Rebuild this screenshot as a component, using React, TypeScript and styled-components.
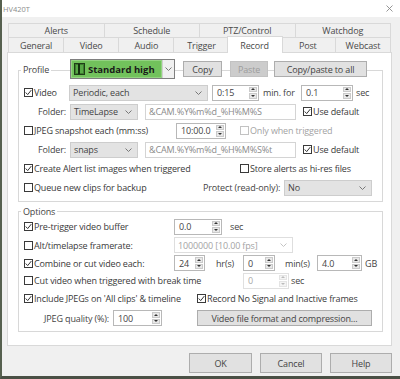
import React from "react";
import styled, { createGlobalStyle, css } from "styled-components";

const GlobalStyle = createGlobalStyle`
  html, body { margin: 0; padding: 0; background: #4b5546; }
  * { box-sizing: border-box; }
`;

const Window = styled.div`
  width: 400px;
  height: 379px;
  display: flex;
  flex-direction: column;
  background: #f0f0f0;
  border-left: 2px solid #56604f;
  border-bottom: 3px solid #4a5045;
  font-family: "Open Sans", "Noto Sans", sans-serif;
  font-size: 9px;
  letter-spacing: -0.15px;
  color: #3a3a3a;
  overflow: hidden;
`;

const TitleBar = styled.div`
  height: 17px;
  flex: none;
  display: flex;
  align-items: center;
  justify-content: space-between;
  background: #fff;
  padding: 0 7px 0 1px;
`;

const Title = styled.span`
  font-size: 7.5px;
  letter-spacing: 0;
  color: #8c8c8c;
`;

const Body = styled.div`
  flex: 1;
  display: flex;
  flex-direction: column;
  padding: 6px 8px 0 5px;
`;

const TabRow = styled.div<{ $h: number }>`
  display: flex;
  height: ${(p) => p.$h}px;
  margin: 0 1px;
  flex: none;
`;

const Tab = styled.div<{ $active?: boolean; $top?: boolean }>`
  flex: 1;
  display: flex;
  align-items: center;
  justify-content: center;
  background: #f0f0f0;
  color: #4a4a4a;
  border: 1px solid #d9d9d9;
  border-top: ${(p) => (p.$top ? "1px solid #d9d9d9" : "none")};
  border-bottom: ${(p) => (p.$top ? "1px solid #d9d9d9" : "none")};
  margin-left: -1px;
  &:first-child {
    margin-left: 0;
  }
  ${(p) =>
    p.$active &&
    css`
      background: #fff;
      border-top: 1px solid #d9d9d9;
      margin: -2px -2px -1px -3px;
      position: relative;
      z-index: 1;
    `}
`;

const Panel = styled.div`
  height: 294px;
  flex: none;
  display: flex;
  flex-direction: column;
  background: #fff;
  border: 1px solid #d9d9d9;
  padding: 0 8px 0 10px;
`;

const Group = styled.div<{ $mt: number; $pb: number }>`
  margin-top: ${(p) => p.$mt}px;
  border: 1px solid #d8d8d8;
  padding: 0 4px ${(p) => p.$pb}px 5px;
  display: flex;
  flex-direction: column;
`;

const GroupHeader = styled.div<{ $h: number; $mt: number }>`
  display: flex;
  align-items: center;
  height: ${(p) => p.$h}px;
  margin: ${(p) => p.$mt}px 0 0 -3px;
`;

const Legend = styled.span`
  background: #fff;
  padding: 0 2px;
  color: #444;
`;

const LegendCell = styled.div<{ $w: number }>`
  width: ${(p) => p.$w}px;
  flex: none;
`;

const Row = styled.div<{ $h: number; $mt?: number }>`
  display: flex;
  align-items: center;
  height: ${(p) => p.$h}px;
  margin-top: ${(p) => p.$mt ?? 0}px;
  flex: none;
`;

const CheckItem = styled.div<{ $w?: number; $ml?: number; $disabled?: boolean }>`
  display: flex;
  align-items: center;
  flex: none;
  width: ${(p) => (p.$w ? `${p.$w}px` : "auto")};
  margin-left: ${(p) => p.$ml ?? 0}px;
  color: ${(p) => (p.$disabled ? "#a3a3a3" : "inherit")};
  white-space: nowrap;
`;

const Box = styled.span<{ $disabled?: boolean }>`
  width: 9px;
  height: 9px;
  flex: none;
  margin-right: 1px;
  background: #fff;
  border: 1px solid ${(p) => (p.$disabled ? "#c2c2c2" : "#3a3a3a")};
  display: flex;
  align-items: center;
  justify-content: center;
`;

const Label = styled.span<{ $w?: number; $ml?: number; $right?: boolean }>`
  flex: none;
  width: ${(p) => (p.$w ? `${p.$w}px` : "auto")};
  margin-left: ${(p) => p.$ml ?? 0}px;
  text-align: ${(p) => (p.$right ? "right" : "left")};
  padding-right: ${(p) => (p.$right ? 4 : 0)}px;
  white-space: nowrap;
  color: #444;
`;

const Combo = styled.div<{ $w: number; $ml?: number; $disabled?: boolean }>`
  width: ${(p) => p.$w}px;
  height: 16px;
  flex: none;
  margin-left: ${(p) => p.$ml ?? 0}px;
  display: flex;
  align-items: center;
  justify-content: space-between;
  padding: 0 5px 0 3px;
  background: ${(p) => (p.$disabled ? "#fff" : "#e3e3e3")};
  border: 1px solid ${(p) => (p.$disabled ? "#dedede" : "#cdcdcd")};
  color: ${(p) => (p.$disabled ? "#a3a3a3" : "#444")};
  white-space: nowrap;
`;

const Field = styled.div<{ $w: number; $ml?: number }>`
  width: ${(p) => p.$w}px;
  height: 16px;
  flex: none;
  margin-left: ${(p) => p.$ml ?? 0}px;
  display: flex;
  align-items: center;
  padding-left: 3px;
  background: #fff;
  border: 1px solid #d4d4d4;
  color: #8a8a8a;
  white-space: nowrap;
  overflow: hidden;
`;

const SpinBox = styled.div<{ $w: number; $ml?: number; $disabled?: boolean }>`
  width: ${(p) => p.$w}px;
  height: 16px;
  flex: none;
  margin-left: ${(p) => p.$ml ?? 0}px;
  display: flex;
  align-items: center;
  padding: 0 1px 0 4px;
  background: #fff;
  border: 1px solid ${(p) => (p.$disabled ? "#e0e0e0" : "#b8b8b8")};
  color: ${(p) => (p.$disabled ? "#a8a8a8" : "#444")};
`;

const SpinValue = styled.span`
  flex: 1;
  white-space: nowrap;
`;

const Arrows = styled.div`
  width: 8px;
  height: 12px;
  display: flex;
  flex-direction: column;
  gap: 1px;
`;

const Arrow = styled.span<{ $disabled?: boolean }>`
  flex: 1;
  display: flex;
  align-items: center;
  justify-content: center;
  background: ${(p) => (p.$disabled ? "#f4f4f4" : "#e8e8e8")};
  border: 1px solid ${(p) => (p.$disabled ? "#e4e4e4" : "#cacaca")};
`;

const Tri = styled.span<{ $down?: boolean; $disabled?: boolean }>`
  width: 0;
  height: 0;
  border-left: 2px solid transparent;
  border-right: 2px solid transparent;
  ${(p) =>
    p.$down
      ? css`border-top: 2px solid ${p.$disabled ? "#bbb" : "#333"};`
      : css`border-bottom: 2px solid ${p.$disabled ? "#bbb" : "#333"};`}
`;

const Btn = styled.button<{ $w: number; $h?: number; $ml?: number; $disabled?: boolean }>`
  width: ${(p) => p.$w}px;
  height: ${(p) => p.$h ?? 16}px;
  flex: none;
  margin: 0 0 0 ${(p) => p.$ml ?? 0}px;
  padding: 0;
  font: inherit;
  letter-spacing: inherit;
  display: flex;
  align-items: center;
  justify-content: center;
  background: ${(p) => (p.$disabled ? "#cccccc" : "#e1e1e1")};
  border: 1px solid ${(p) => (p.$disabled ? "#c2c2c2" : "#adadad")};
  color: ${(p) => (p.$disabled ? "#9c9c9c" : "#444")};
  white-space: nowrap;
`;

const ProfileCombo = styled.div`
  width: 105px;
  height: 20px;
  flex: none;
  display: flex;
  border: 1px solid #7f7f7f;
  background: #f0f0f0;
`;

const ProfileFace = styled.div`
  flex: 1;
  display: flex;
  align-items: center;
  gap: 3px;
  padding-left: 2px;
  background: #72c25c;
  border: 1px solid #94d482;
  font-size: 9.5px;
  font-weight: 700;
  letter-spacing: 0;
  color: #1a1a1a;
`;

const ProfileArrow = styled.div`
  width: 12px;
  display: flex;
  align-items: center;
  justify-content: center;
  border-left: 1px solid #cfcfcf;
`;

const ButtonBar = styled.div`
  display: flex;
  justify-content: flex-end;
  gap: 8px;
  margin-top: 7px;
`;

const Chevron = ({ light }: { light?: boolean }) => (
  <svg width="7" height="4" viewBox="0 0 7 4">
    <polyline points="0.5,0.5 3.5,3.5 6.5,0.5" fill="none" stroke={light ? "#c4c4c4" : "#777"} strokeWidth="1" />
  </svg>
);

const Check = ({ checked, disabled }: { checked?: boolean; disabled?: boolean }) => (
  <Box $disabled={disabled}>
    {checked && (
      <svg width="7" height="7" viewBox="0 0 7 7">
        <polyline points="0.7,3.5 2.7,5.6 6.3,1.1" fill="none" stroke="#333" strokeWidth="1" />
      </svg>
    )}
  </Box>
);

const CheckBox = ({
  text,
  checked,
  disabled,
  w,
  ml,
}: {
  text: string;
  checked?: boolean;
  disabled?: boolean;
  w?: number;
  ml?: number;
}) => (
  <CheckItem $w={w} $ml={ml} $disabled={disabled}>
    <Check checked={checked} disabled={disabled} />
    {text}
  </CheckItem>
);

const Spin = ({ value, w, ml, disabled }: { value: string; w: number; ml?: number; disabled?: boolean }) => (
  <SpinBox $w={w} $ml={ml} $disabled={disabled}>
    <SpinValue>{value}</SpinValue>
    <Arrows>
      <Arrow $disabled={disabled}>
        <Tri $disabled={disabled} />
      </Arrow>
      <Arrow $disabled={disabled}>
        <Tri $down $disabled={disabled} />
      </Arrow>
    </Arrows>
  </SpinBox>
);

const Drop = ({ text, w, ml, disabled }: { text: string; w: number; ml?: number; disabled?: boolean }) => (
  <Combo $w={w} $ml={ml} $disabled={disabled}>
    <span>{text}</span>
    <Chevron light={disabled} />
  </Combo>
);

const ProfileIcon = () => (
  <svg width="11" height="12" viewBox="0 0 11 12">
    <rect x="0.5" y="0.5" width="10" height="11" fill="#3d7f2e" stroke="#1f3d18" />
    <rect x="2" y="2" width="7" height="8" fill="#58a947" />
    <rect x="4" y="1" width="2" height="10" fill="#14300f" />
  </svg>
);

const topTabs = ["Alerts", "Schedule", "PTZ/Control", "Watchdog"];
const bottomTabs = ["General", "Video", "Audio", "Trigger", "Record", "Post", "Webcast"];

export default function App() {
  return (
    <>
      <GlobalStyle />
      <Window>
        <TitleBar>
          <Title>HV420T</Title>
          <svg width="7" height="7" viewBox="0 0 7 7">
            <path d="M0.5 0.5 L6.5 6.5 M6.5 0.5 L0.5 6.5" stroke="#8a8a8a" strokeWidth="0.9" />
          </svg>
        </TitleBar>
        <Body>
          <TabRow $h={15}>
            {topTabs.map((t) => (
              <Tab key={t} $top>
                {t}
              </Tab>
            ))}
          </TabRow>
          <TabRow $h={14}>
            {bottomTabs.map((t) => (
              <Tab key={t} $active={t === "Record"}>
                {t}
              </Tab>
            ))}
          </TabRow>
          <Panel>
            <Group $mt={17} $pb={4}>
              <GroupHeader $h={20} $mt={-12}>
                <LegendCell $w={49}>
                  <Legend>Profile</Legend>
                </LegendCell>
                <ProfileCombo>
                  <ProfileFace>
                    <ProfileIcon />
                    Standard high
                  </ProfileFace>
                  <ProfileArrow>
                    <Chevron />
                  </ProfileArrow>
                </ProfileCombo>
                <Btn $w={39} $ml={8}>Copy</Btn>
                <Btn $w={38} $ml={8} $disabled>Paste</Btn>
                <Btn $w={93} $ml={6}>Copy/paste to all</Btn>
              </GroupHeader>

              <Row $h={19} $mt={4}>
                <CheckBox text="Video" checked w={45} />
                <Drop text="Periodic, each" w={139} />
                <Spin value="0:15" w={47} ml={4} />
                <Label $w={38} $ml={4}>min. for</Label>
                <Spin value="0.1" w={52} />
                <Label $ml={3}>sec</Label>
              </Row>
              <Row $h={19}>
                <Label $w={46} $right>Folder:</Label>
                <Drop text="TimeLapse" w={68} />
                <Field $w={151} $ml={7}>&amp;CAM.%Y%m%d_%H%M%S</Field>
                <CheckBox text="Use default" checked ml={7} />
              </Row>
              <Row $h={19}>
                <CheckBox text="JPEG snapshot each (mm:ss)" w={152} />
                <Spin value="10:00.0" w={50} />
                <CheckBox text="Only when triggered" disabled ml={14} />
              </Row>
              <Row $h={19}>
                <Label $w={46} $right>Folder:</Label>
                <Drop text="snaps" w={68} />
                <Field $w={151} $ml={7}>&amp;CAM.%Y%m%d_%H%M%S%t</Field>
                <CheckBox text="Use default" checked ml={7} />
              </Row>
              <Row $h={19}>
                <CheckBox text="Create Alert list images when triggered" checked w={216} />
                <CheckBox text="Store alerts as hi-res files" />
              </Row>
              <Row $h={19}>
                <CheckBox text="Queue new clips for backup" w={179} />
                <Label $w={81}>Protect (read-only):</Label>
                <Drop text="No" w={88} />
              </Row>
            </Group>

            <Group $mt={9} $pb={3}>
              <GroupHeader $h={12} $mt={-7}>
                <Legend>Options</Legend>
              </GroupHeader>
              <Row $h={19}>
                <CheckBox text="Pre-trigger video buffer" checked w={150} />
                <Spin value="0.0" w={48} />
                <Label $ml={8}>sec</Label>
              </Row>
              <Row $h={18}>
                <CheckBox text="Alt/timelapse framerate:" w={150} />
                <Drop text="1000000 [10.00 fps]" w={119} disabled />
              </Row>
              <Row $h={18}>
                <CheckBox text="Combine or cut video each:" checked w={150} />
                <Spin value="24" w={31} />
                <Label $w={27} $ml={11}>hr(s)</Label>
                <Spin value="0" w={32} />
                <Label $w={32} $ml={10}>min(s)</Label>
                <Spin value="4.0" w={45} />
                <Label $ml={3}>GB</Label>
              </Row>
              <Row $h={17}>
                <CheckBox text="Cut video when triggered with break time" w={219} />
                <Spin value="0" w={46} disabled />
                <Label $ml={2}>sec</Label>
              </Row>
              <Row $h={19}>
                <CheckBox text="Include JPEGs on 'All clips' & timeline" checked w={173} />
                <CheckBox text="Record No Signal and Inactive frames" checked />
              </Row>
              <Row $h={20}>
                <Label $w={89} $right>JPEG quality (%):</Label>
                <Spin value="100" w={49} />
                <Btn $w={175} $ml={35}>Video file format and compression...</Btn>
              </Row>
            </Group>
          </Panel>
          <ButtonBar>
            <Btn $w={63} $h={20}>OK</Btn>
            <Btn $w={62} $h={20}>Cancel</Btn>
            <Btn $w={62} $h={20}>Help</Btn>
          </ButtonBar>
        </Body>
      </Window>
    </>
  );
}
